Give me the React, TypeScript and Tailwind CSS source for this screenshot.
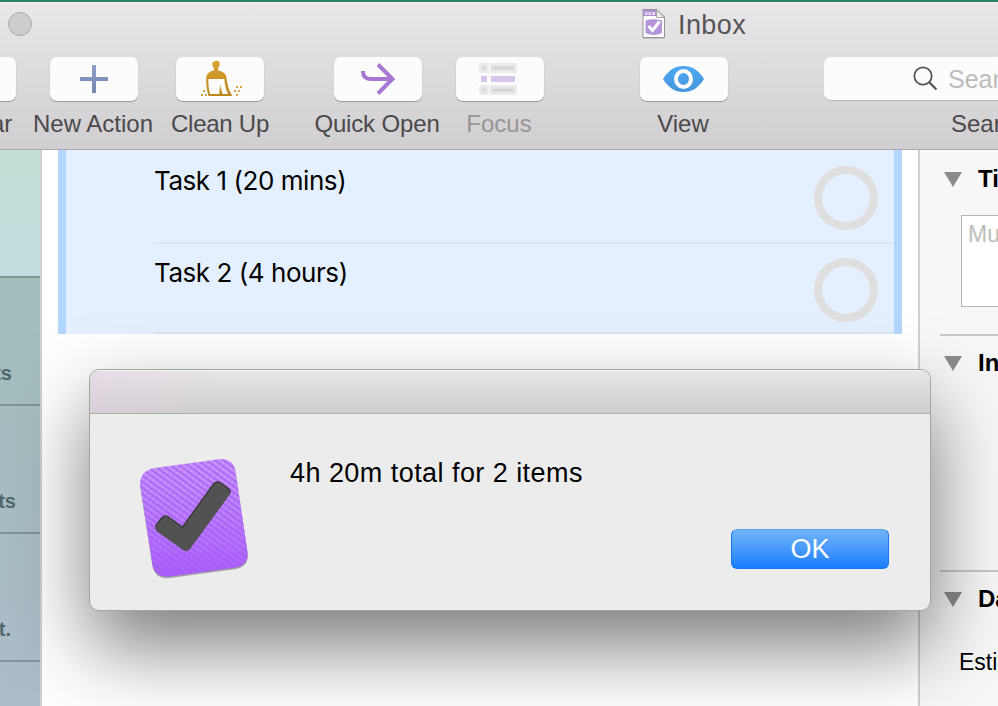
import type { ReactNode } from "react";

const BrushIcon = () => (
  <svg width="44" height="40" viewBox="0 0 44 40" className="ml-[3px]">
    <defs>
      <linearGradient id="brush" x1="0" y1="0" x2="0" y2="1">
        <stop offset="0" stopColor="#dba534" />
        <stop offset="1" stopColor="#bd861c" />
      </linearGradient>
    </defs>
    <path
      fill="url(#brush)"
      fillRule="evenodd"
      d="M15 2Q17 1.500 19 2.300 20.200 4 19.500 6.500L18 9.500V11.500C22 12 25.500 14 26.300 17.500 27.300 25 28.500 31 32 36.500V37H8.500C6.700 31 6 25 6.200 18.500 6.800 14.500 10 12 14 11.500V9.500L12.300 6.500Q11.500 3 15 2zM8.300 20C8.300 25.500 8.700 30.500 10 35H19.300L20 25.500 22.500 35H28C25.800 30.500 24.700 25.500 24.300 20z"
    />
    <path
      fill="#d5a545"
      d="M3 31h2v2H3zM1 35h2v2H1zM5 35h2v2H5zM36 27h2v2h-2zM40 27h2v2h-2zM34 31h2v2h-2zM38 31h2v2h-2zM36 35h2v2h-2z"
    />
  </svg>
);

const PlusIcon = () => (
  <svg width="28" height="28" viewBox="0 0 28 28">
    <defs>
      <linearGradient id="plus" x1="0" y1="0" x2="0" y2="1">
        <stop offset="0" stopColor="#8f9ec8" />
        <stop offset="1" stopColor="#7587ae" />
      </linearGradient>
    </defs>
    <path fill="url(#plus)" d="M12 0h4v12h12v4H16v12h-4V16H0v-4h12z" />
  </svg>
);

const QuickOpenIcon = () => (
  <svg width="34" height="32" viewBox="0 0 34 32" fill="none" stroke="#a678d4" strokeWidth="4">
    <path d="M2 8v1c0 4.500 3 7 8 7h21" />
    <path d="M17 1.500 31.500 16 17 30.500" />
  </svg>
);

const FocusIcon = () => (
  <svg width="38" height="32" viewBox="0 0 38 32" className="mr-1">
    {[0, 22].map((y) => (
      <g key={y}>
        <path fill="#ececec" d={`M1 ${y}h9v10H1zM11 ${y}h26a1 1 0 0 1 1 1v8a1 1 0 0 1-1 1H11zM0 ${y + 1}h1v8H0z`} />
        <path fill="#e2e2e2" d={`M2 ${y + 2}h6v6H2zM12 ${y + 2}h24v6H12z`} />
        <path fill="#d2d2d2" d={`M4 ${y + 4}h2v2H4zM14 ${y + 4}h20v2H14z`} />
      </g>
    ))}
    <path fill="#d7c5ec" d="M2 13h6v6H2zM12 13h24v6H12z" />
  </svg>
);

const EyeIcon = () => (
  <svg width="42" height="26" viewBox="0 0 42 26">
    <defs>
      <linearGradient id="eye" x1="0" y1="0" x2="0" y2="1">
        <stop offset="0" stopColor="#4fa8f2" />
        <stop offset="1" stopColor="#4595dc" />
      </linearGradient>
    </defs>
    <path fill="url(#eye)" d="M0 13C5 4.500 12 0 20.500 0S36 4.500 41 13C36 21.500 29 26 20.500 26S5 21.500 0 13z" />
    <ellipse cx="20.500" cy="13" rx="7.500" ry="8" fill="none" stroke="#fcfcfc" strokeWidth="4" />
  </svg>
);

const DocumentIcon = () => (
  <svg width="24" height="32" viewBox="0 0 24 32">
    <path d="M1 1h14l7.500 8v21H1z" fill="#aaa" opacity=".5" />
    <path d="M1 .5h14L22.500 8v20.500H1z" fill="#fff" stroke="#949494" />
    <path d="M1 1h13l3 6H1z" fill="#ad8fd2" />
    <path d="M3 3h2.500v3H3zM6.500 3H9v3H6.500zM10 3h3v3h-3z" fill="#e5d9f2" />
    <path d="M14.500 1v7.500h7.500z" fill="#eee" stroke="#999" strokeWidth=".8" />
    <path d="M3.500 11.500Q12 9 20 11.500V24Q12 28 3.500 24z" fill="#b595d9" />
    <path d="m6.500 17 4 4.500 7-9" fill="none" stroke="#fff" strokeWidth="3" />
  </svg>
);

const TILE = "M155 468 219 459.300Q233 458 235.500 471L247.500 552Q249 565 236 567.500L170 576.500Q155.500 578 152.500 565L140.300 486Q139 471 155 468z";

const AppIcon = () => (
  <svg width="112" height="124" viewBox="138 457 112 124">
    <defs>
      <linearGradient id="tile" x1="0" y1="0" x2="0" y2="1">
        <stop offset="0" stopColor="#be82fb" />
        <stop offset="1" stopColor="#a75af8" />
      </linearGradient>
      <linearGradient id="fade" x1="0" y1="0" x2="0" y2="1">
        <stop offset="0" stopColor="#fff" />
        <stop offset=".5" stopColor="#aaa" />
        <stop offset="1" stopColor="#111" />
      </linearGradient>
      <pattern id="weave" width="5" height="5" patternUnits="userSpaceOnUse" patternTransform="rotate(36)">
        <rect width="5" height="2" fill="#a45cf2" opacity=".6" />
        <rect width="4" height="2" y="2.500" fill="#d8b2fd" opacity=".6" />
      </pattern>
      <mask id="weaveMask">
        <rect x="130" y="450" width="130" height="130" fill="url(#fade)" />
      </mask>
    </defs>
    <path d={TILE} fill="#888" opacity=".75" transform="translate(0 1.500)" />
    <path d={TILE} fill="url(#tile)" />
    <g mask="url(#weaveMask)">
      <path d={TILE} fill="url(#weave)" />
    </g>
    <path d="M155.500 526 162 517.500Q165 514.500 168.500 517L182.500 527 213.500 484Q217 480.500 221 483L229 489Q231.500 492 229.500 495L190 549Q187 552.500 183 550L157 531.500Q154.500 529 155.500 526z" fill="#525252" />
    <path d="M155.500 526 162 517.500Q165 514.500 168.500 517L182.500 527 213.500 484Q217 480.500 221 483L229 489Q230.500 490.500 230 493" fill="none" stroke="#393939" strokeWidth="1.300" />
  </svg>
);

function Tool({ label, className, labelClass, children }: { label: string; className: string; labelClass: string; children: ReactNode }) {
  return (
    <div className={`flex shrink-0 flex-col items-center ${className}`}>
      <div className="flex h-11 w-[88px] shrink-0 items-center justify-center rounded-[7px] bg-[#fcfcfc] shadow-[0_1px_1px_rgba(0,0,0,0.3)]">{children}</div>
      <span className={`mt-[9px] whitespace-nowrap text-[24px] leading-[28px] ${labelClass}`}>{label}</span>
    </div>
  );
}

function Task({ title, className }: { title: string; className: string }) {
  return (
    <div className={`ml-[88px] flex justify-between border-b-2 border-[#dae5f2] ${className}`}>
      <span className="whitespace-nowrap font-['Inter',sans-serif] text-[26px] leading-[30px] tracking-[-0.45px] text-black">{title}</span>
      <span className="mr-4 size-16 rounded-full border-8 border-[#dfdfdf]" />
    </div>
  );
}

function Section({ title }: { title: string }) {
  return (
    <div className="ml-1 flex items-center">
      <svg width="18" height="15" viewBox="0 0 18 15" className="shrink-0">
        <path d="M0 0h18L9 15z" fill="#8b8b8b" />
      </svg>
      <span className="ml-4 whitespace-nowrap text-[24px] font-bold leading-[28px]">{title}</span>
    </div>
  );
}

export default function App() {
  return (
    <div className="relative flex h-[706px] w-[998px] flex-col overflow-hidden bg-white font-['Liberation_Sans',Arial,sans-serif] text-black">
      <header className="flex h-[150px] shrink-0 flex-col border-b border-t-2 border-b-[#aaa8aa] border-t-[#2a8264] bg-gradient-to-b from-[#e9e7e9] to-[#d1ced1]">
        <div className="flex h-[55px] shrink-0 border-t border-[#f5f4f5]">
          <div className="ml-2 mt-[9px] size-6 rounded-full border border-[#aaa9aa] bg-[#cecdce]" />
          <div className="ml-[610px] mt-1.5">
            <DocumentIcon />
          </div>
          <span className="ml-3 mt-[7px] text-[27px] leading-[30px] tracking-[0.4px] text-[#575557]">Inbox</span>
        </div>
        <div className="flex text-[#4b494b]">
          <div className="flex w-[32px] shrink-0 flex-col">
            <div className="h-11 w-4 rounded-r-[7px] bg-[#fcfcfc] shadow-[0_1px_1px_rgba(0,0,0,0.3)]" />
            <span className="-ml-[9px] mt-[9px] text-[24px] leading-[28px]">ar</span>
          </div>
          <Tool label="New Action" className="w-[124px]" labelClass="-translate-x-px"><PlusIcon /></Tool>
          <Tool label="Clean Up" className="w-[128px]" labelClass="tracking-[-0.25px]"><BrushIcon /></Tool>
          <Tool label="Quick Open" className="ml-[31px] w-[126px]" labelClass="-translate-x-px tracking-[-0.15px]"><QuickOpenIcon /></Tool>
          <Tool label="Focus" className="w-[118px]" labelClass="-translate-x-px text-[#979597]"><FocusIcon /></Tool>
          <Tool label="View" className="ml-[65px] w-[120px]" labelClass="-translate-x-px"><EyeIcon /></Tool>
          <div className="ml-[80px] flex w-[174px] shrink-0 flex-col overflow-hidden">
            <div className="flex h-[44px] items-center rounded-l-[7px] border-b border-[#b9b7b9] bg-[#fcfcfc] pl-[89px]">
              <svg width="25" height="25" viewBox="0 0 25 25" fill="none" stroke="#555" strokeWidth="1.800" className="shrink-0">
                <circle cx="10" cy="10" r="8.700" />
                <path d="m16 16 7.500 7.500" strokeWidth="2.200" />
              </svg>
              <span className="ml-2.5 whitespace-nowrap text-[25px] leading-[30px] text-[#bcbcbc]">Search</span>
            </div>
            <span className="ml-[127px] mt-[9px] whitespace-nowrap text-[24px] leading-[28px]">Search</span>
          </div>
        </div>
      </header>

      <div className="flex min-h-0 flex-1">
        <aside className="flex w-[42px] shrink-0 flex-col overflow-hidden border-r-2 border-[#cfcfcf] bg-gradient-to-b from-[#a3bebd] from-30% to-[#adbdc9] text-[20px] font-bold leading-[24px] text-[#50696a]">
          <div className="h-[128px] border-b-2 border-[#7e9690] bg-gradient-to-b from-[#c3dfd6] to-[#c3dcdf]" />
          <div className="flex h-[128px] items-end justify-end border-b-2 border-[#7e9694] pb-[19px] pr-[28px]"><span>ts</span></div>
          <div className="flex h-[128px] items-end justify-end border-b-2 border-[#7e9598] pb-[19px] pr-[24px]"><span>ts</span></div>
          <div className="flex h-[128px] items-end justify-end border-b-2 border-[#82959c] pb-[19px] pr-[29px]"><span>t.</span></div>
        </aside>

        <main className="w-[876px] shrink-0 px-4">
          <div className="h-[184px] border-x-8 border-[#b1d7ff] bg-[#e4f0ff]">
            <Task title="Task 1 (20 mins)" className="h-[94px] pt-4" />
            <Task title="Task 2 (4 hours)" className="h-[90px] pt-[14px]" />
          </div>
        </main>

        <aside className="flex min-w-0 flex-1 flex-col overflow-hidden border-l-2 border-[#d0d0d0] bg-[#f7f7f7]">
          <div className="ml-5 h-[186px] shrink-0 border-b-2 border-[#c8c8c8] pt-[15px]">
            <Section title="Ti" />
            <div className="ml-[21px] mt-[22px] h-[92px] w-[100px] border border-[#b4b4b4] bg-white pl-1.5 pt-[5px] text-[23px] leading-[27px] text-[#bcbcbc]">Mu</div>
          </div>
          <div className="ml-5 h-[236px] shrink-0 border-b-2 border-[#c8c8c8] pt-[13px]">
            <Section title="In" />
          </div>
          <div className="ml-5 pt-[13px]">
            <Section title="Da" />
            <div className="ml-[19px] mt-[35px] whitespace-nowrap text-[23px] leading-[28px]">Esti</div>
          </div>
        </aside>
      </div>

      <div role="dialog" className="absolute left-[89px] top-[369px] flex h-[242px] w-[842px] flex-col overflow-hidden rounded-[10px] border border-[#a5a5a5] bg-[#ececec] shadow-[0_36px_80px_rgba(0,0,0,0.52)]">
        <div className="h-11 shrink-0 border-b border-t border-b-[#b0aeb0] border-t-[#f5f3f5] bg-gradient-to-b from-[#e7e5e7] to-[#cecdce]">
          <div className="h-full bg-gradient-to-r from-[#e8cfe6]/35 via-transparent via-15% to-transparent" />
        </div>
        <div className="flex flex-1">
          <div className="ml-12 mt-[43px]"><AppIcon /></div>
          <div className="ml-[40px] flex w-[599px] flex-col">
            <span className="mt-[44px] whitespace-nowrap text-[27px] leading-[30px] tracking-[0.45px]">4h 20m total for 2 items</span>
            <button className="mt-[41px] h-10 w-[158px] self-end rounded-md border border-[#1777ef] border-t-[#5ba3e8] bg-gradient-to-b from-[#6fb3f8] to-[#147dff] text-[27px] leading-[38px] text-white">OK</button>
          </div>
        </div>
      </div>
    </div>
  );
}
